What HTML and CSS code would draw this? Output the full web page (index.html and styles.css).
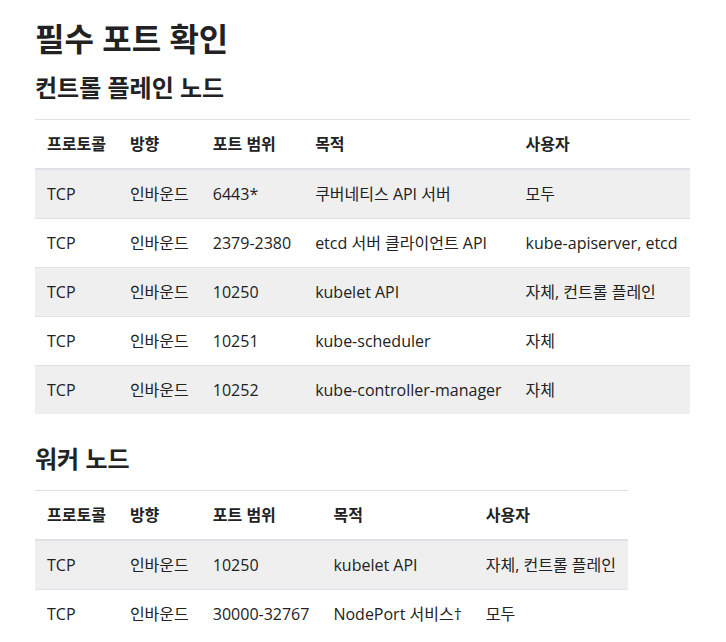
FILE: index.html
```html
<!DOCTYPE html>
<html lang="ko">
<head>
<meta charset="utf-8">
<title>필수 포트 확인</title>
<link rel="stylesheet" href="styles.css">
</head>
<body>
<main class="content">
  <h1 class="title">필수 포트 확인</h1>

  <h2 class="section">컨트롤 플레인 노드</h2>
  <table class="ports">
    <thead>
      <tr>
        <th>프로토콜</th>
        <th>방향</th>
        <th>포트 범위</th>
        <th>목적</th>
        <th>사용자</th>
      </tr>
    </thead>
    <tbody>
      <tr>
        <td>TCP</td>
        <td>인바운드</td>
        <td>6443*</td>
        <td>쿠버네티스 API 서버</td>
        <td>모두</td>
      </tr>
      <tr>
        <td>TCP</td>
        <td>인바운드</td>
        <td>2379-2380</td>
        <td>etcd 서버 클라이언트 API</td>
        <td>kube-apiserver, etcd</td>
      </tr>
      <tr>
        <td>TCP</td>
        <td>인바운드</td>
        <td>10250</td>
        <td>kubelet API</td>
        <td>자체, 컨트롤 플레인</td>
      </tr>
      <tr>
        <td>TCP</td>
        <td>인바운드</td>
        <td>10251</td>
        <td>kube-scheduler</td>
        <td>자체</td>
      </tr>
      <tr>
        <td>TCP</td>
        <td>인바운드</td>
        <td>10252</td>
        <td>kube-controller-manager</td>
        <td>자체</td>
      </tr>
    </tbody>
  </table>

  <h2 class="section section-next">워커 노드</h2>
  <table class="ports">
    <thead>
      <tr>
        <th>프로토콜</th>
        <th>방향</th>
        <th>포트 범위</th>
        <th>목적</th>
        <th>사용자</th>
      </tr>
    </thead>
    <tbody>
      <tr>
        <td>TCP</td>
        <td>인바운드</td>
        <td>10250</td>
        <td>kubelet API</td>
        <td>자체, 컨트롤 플레인</td>
      </tr>
      <tr>
        <td>TCP</td>
        <td>인바운드</td>
        <td>30000-32767</td>
        <td>NodePort 서비스†</td>
        <td>모두</td>
      </tr>
    </tbody>
  </table>
</main>
</body>
</html>
```

FILE: styles.css
```css
html, body {
  margin: 0;
  padding: 0;
  background: #ffffff;
}

body {
  font-family: "Open Sans", "Noto Sans CJK KR", sans-serif;
  font-size: 16px;
  line-height: 1.5;
  color: #222222;
}

.content {
  padding: 19px 35px 0 35px;
}

.title {
  margin: 0;
  font-size: 32px;
  line-height: 40px;
  font-weight: 700;
}

.section {
  margin: 13px 0 15px 0;
  font-size: 24px;
  line-height: 32px;
  font-weight: 700;
}

.section-next {
  margin-top: 29px;
}

.ports {
  border-collapse: collapse;
  margin: 0;
}

.ports th,
.ports td {
  padding: 12px;
  line-height: 24px;
  text-align: left;
  vertical-align: top;
  white-space: nowrap;
  border-top: 1px solid #dee2e6;
}

.ports th {
  font-weight: 700;
  border-bottom: 2px solid #dee2e6;
}

.ports tbody tr:nth-child(odd) {
  background-color: #efefef;
}
```
